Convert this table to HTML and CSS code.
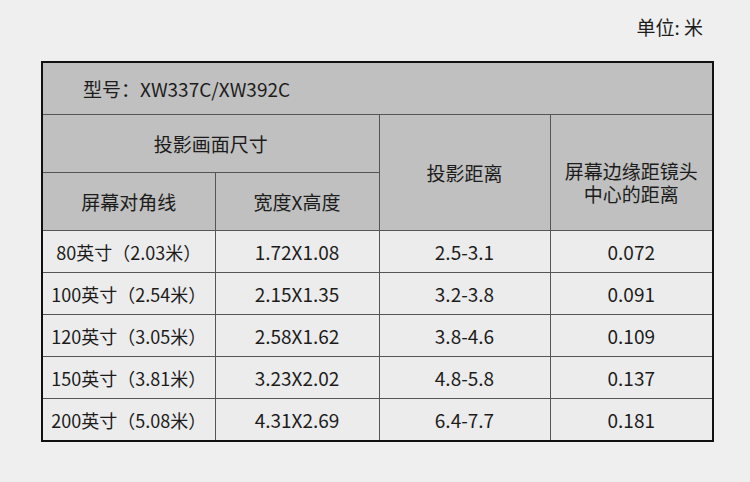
FILE: index.html
```html
<!DOCTYPE html>
<html lang="zh">
<head>
<meta charset="utf-8">
<link rel="stylesheet" href="styles.css">
</head>
<body>
<div class="page">
  <div class="unit">单位: 米</div>
  <table class="spec">
    <colgroup>
      <col class="c1"><col class="c2"><col class="c3"><col class="c4">
    </colgroup>
    <tr class="model-row"><td colspan="4" class="model">型号：XW337C/XW392C</td></tr>
    <tr class="head-row">
      <th colspan="2">投影画面尺寸</th>
      <th rowspan="2">投影距离</th>
      <th rowspan="2" class="two"><span class="ln">屏幕边缘距镜头</span><span class="ln">中心的距离</span></th>
    </tr>
    <tr class="head-row">
      <th>屏幕对角线</th>
      <th>宽度X高度</th>
    </tr>
    <tr><td class="size">80英寸（2.03米）</td><td>1.72X1.08</td><td>2.5-3.1</td><td>0.072</td></tr>
    <tr><td class="size">100英寸（2.54米）</td><td>2.15X1.35</td><td>3.2-3.8</td><td>0.091</td></tr>
    <tr><td class="size">120英寸（3.05米）</td><td>2.58X1.62</td><td>3.8-4.6</td><td>0.109</td></tr>
    <tr><td class="size">150英寸（3.81米）</td><td>3.23X2.02</td><td>4.8-5.8</td><td>0.137</td></tr>
    <tr><td class="size">200英寸（5.08米）</td><td>4.31X2.69</td><td>6.4-7.7</td><td>0.181</td></tr>
  </table>
</div>
</body>
</html>
```

FILE: styles.css
```css
html, body {
  margin: 0;
  padding: 0;
  background: #efefef;
}
body {
  width: 750px;
  height: 482px;
  overflow: hidden;
  font-family: "Noto Sans CJK SC", "Noto Sans", sans-serif;
  color: #1c1c1c;
}
.page {
  padding: 14px 0 0 41px;
}
.unit {
  width: 662px;
  text-align: right;
  font-size: 19px;
  line-height: 26px;
  height: 26px;
}
.spec {
  margin-top: 21px;
  border-collapse: collapse;
  border: 2px solid #111;
  width: 671px;
  font-size: 19px;
  table-layout: fixed;
}
.c1 { width: 173px; }
.c2 { width: 164px; }
.c3 { width: 171px; }
.c4 { width: 163px; }
.spec td, .spec th {
  border: 1px solid #555;
  text-align: center;
  font-weight: normal;
  padding: 0;
  line-height: 26px;
}
.spec td {
  background: #ececec;
  height: 41px;
}
.spec td.size {
  font-size: 18px;
}
.spec th {
  background: #c0c0c0;
  height: 57px;
}
.spec .model {
  background: #c0c0c0;
  text-align: left;
  padding-left: 40px;
  height: 51px;
  border-bottom: 1px solid #555;
}
.spec th.two {
  vertical-align: top;
  padding-top: 44px;
  height: auto;
}
.ln {
  display: block;
  line-height: 23px;
  height: 23px;
}
```
